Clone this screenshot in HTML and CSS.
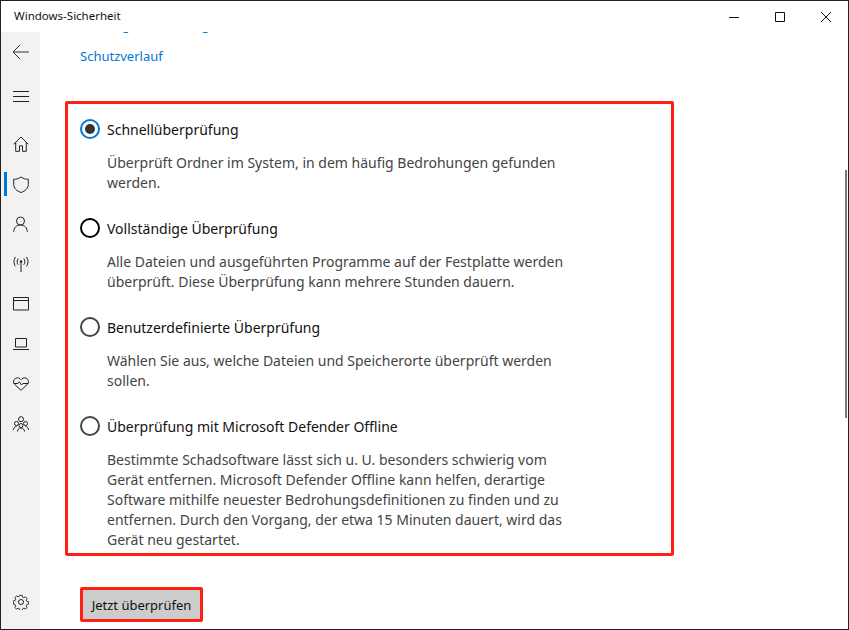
FILE: index.html
```html
<!DOCTYPE html>
<html lang="de">
<head>
<meta charset="utf-8">
<title>Windows-Sicherheit</title>
<link rel="stylesheet" href="styles.css">
</head>
<body>
<div class="window">
  <header class="titlebar">
    <span class="title">Windows-Sicherheit</span>
    <div class="controls">
      <span class="ctl"><svg width="10" height="10" viewBox="0 0 10 10"><path d="M0 5.500H10" stroke="#111" fill="none"/></svg></span>
      <span class="ctl"><svg width="10" height="10" viewBox="0 0 10 10"><path d="M.5.500h9v9h-9z" stroke="#111" fill="none"/></svg></span>
      <span class="ctl"><svg width="10" height="10" viewBox="0 0 10 10"><path d="M0 0L10 10M10 0L0 10" stroke="#111" fill="none"/></svg></span>
    </div>
  </header>
  <div class="body">
    <nav class="sidebar">
      <div class="navitem back"><svg width="18" height="16" viewBox="0 0 18 16"><path d="M1 8H17M8 1L1 8l7 7" stroke="#333" fill="none"/></svg></div>
      <div class="navitem burger"><svg width="16" height="12" viewBox="0 0 16 12"><path d="M0 1.500H16M0 6.500H16M0 11.500H16" stroke="#222" fill="none"/></svg></div>
      <div class="navlist">
        <div class="navitem"><svg width="16" height="16" viewBox="0 0 16 16"><path d="M.7 8.200L8 1l7.300 7.200M2.700 6.500v8.800h3.800V9.800h3v5.500h3.800V6.500" stroke="#222" fill="none"/></svg></div>
        <div class="navitem active"><svg width="16" height="17" viewBox="0 0 16 17"><path d="M8 1C6 2.500 3.500 3.300.7 3.300v5.200c0 3.700 3 6.500 7.300 8 4.300-1.500 7.300-4.300 7.300-8V3.300C12.500 3.300 10 2.500 8 1z" stroke="#222" fill="none"/></svg></div>
        <div class="navitem"><svg width="15" height="16" viewBox="0 0 15 16"><circle cx="7.500" cy="5" r="4" stroke="#222" fill="none"/><path d="M.7 15.800c0-4 2.800-6.800 6.800-6.800s6.800 2.800 6.800 6.800" stroke="#222" fill="none"/></svg></div>
        <div class="navitem"><svg width="16" height="16" viewBox="0 0 16 16"><circle cx="8" cy="5.500" r="1.200" fill="#222"/><path d="M8 6v10M5.200 2.500C3.800 4.300 3.800 7 5.200 8.800M10.800 2.500c1.400 1.800 1.400 4.500 0 6.300M2.500 1C.5 3.600.5 7.800 2.500 10.300M13.500 1c2 2.600 2 6.800 0 9.300" stroke="#222" fill="none"/></svg></div>
        <div class="navitem"><svg width="16" height="14" viewBox="0 0 16 14"><path d="M.5.500h15v12.500H.5zM.5 3.500h15" stroke="#222" fill="none"/></svg></div>
        <div class="navitem"><svg width="16" height="12" viewBox="0 0 16 12"><path d="M2.500.500h11v8.500h-11zM0 11.500h16" stroke="#222" fill="none"/></svg></div>
        <div class="navitem"><svg width="16" height="14" viewBox="0 0 16 14"><path d="M8 13.300L1.800 7.500C.2 6 .2 3.500 1.600 2 3 .5 5.500.4 7 1.800L8 2.800l1-1C10.500.4 13 .5 14.400 2c1.400 1.500 1.400 4-.2 5.500z" stroke="#222" fill="none"/><path d="M.8 6.500H5l1.300-1.800 2.200 3.300 1.300-1.500h5.400" stroke="#222" fill="none"/></svg></div>
        <div class="navitem"><svg width="16" height="16" viewBox="0 0 16 16"><circle cx="8" cy="3.200" r="2.500" stroke="#222" fill="none"/><circle cx="3.500" cy="7.500" r="2" stroke="#222" fill="none"/><circle cx="12.500" cy="7.500" r="2" stroke="#222" fill="none"/><circle cx="8" cy="9.500" r="2" stroke="#222" fill="none"/><path d="M.5 14c0-2 1.200-3.500 3-3.500M15.500 14c0-2-1.200-3.500-3-3.500M4.500 15.500c0-2 1.500-3.500 3.500-3.500s3.500 1.500 3.500 3.500" stroke="#222" fill="none"/></svg></div>
      </div>
      <div class="navitem settings"><svg width="16" height="16" viewBox="0 0 16 16"><circle cx="8" cy="8" r="2.500" stroke="#222" fill="none"/><path d="M6.700.600h2.600l.4 2 1.500.7 1.800-1 1.800 1.800-1 1.800.7 1.500 2 .4v2.600l-2 .4-.7 1.500 1 1.800-1.800 1.800-1.800-1-1.500.7-.4 2H6.700l-.4-2-1.500-.7-1.800 1-1.800-1.800 1-1.800-.7-1.500-2-.4V6.700l2-.4.7-1.500-1-1.800 1.800-1.800 1.800 1 1.500-.7z" transform="translate(.8 .8) scale(.9)" stroke="#222" fill="none"/></svg></div>
    </nav>
    <main class="main">
      <div class="scroller">
        <a class="link first">Zulässige Bedrohungen</a>
        <a class="link">Schutzverlauf</a>
        <section class="options">
          <div class="option">
            <div class="label"><span class="radio checked"></span>Schnellüberprüfung</div>
            <p class="desc">Überprüft Ordner im System, in dem häufig Bedrohungen gefunden werden.</p>
          </div>
          <div class="option">
            <div class="label"><span class="radio focus"></span>Vollständige Überprüfung</div>
            <p class="desc">Alle Dateien und ausgeführten Programme auf der Festplatte werden überprüft. Diese Überprüfung kann mehrere Stunden dauern.</p>
          </div>
          <div class="option">
            <div class="label"><span class="radio"></span>Benutzerdefinierte Überprüfung</div>
            <p class="desc">Wählen Sie aus, welche Dateien und Speicherorte überprüft werden sollen.</p>
          </div>
          <div class="option">
            <div class="label"><span class="radio"></span>Überprüfung mit Microsoft Defender Offline</div>
            <p class="desc">Bestimmte Schadsoftware lässt sich u. U. besonders schwierig vom Gerät entfernen. Microsoft Defender Offline kann helfen, derartige Software mithilfe neuester Bedrohungsdefinitionen zu finden und zu entfernen. Durch den Vorgang, der etwa 15 Minuten dauert, wird das Gerät neu gestartet.</p>
          </div>
        </section>
        <button class="scan">Jetzt überprüfen</button>
      </div>
      <div class="scrollthumb"></div>
    </main>
  </div>
</div>
</body>
</html>
```
FILE: styles.css
```css
* { box-sizing: border-box; }
html, body { margin: 0; height: 630px; overflow: hidden; background: #fff; }
body { font-family: "Noto Sans", "Open Sans", sans-serif; font-size: 14px; color: #000; }
.window { width: 849px; height: 630px; border: 1px solid #222; display: flex; flex-direction: column; background: #fff; }
.titlebar { height: 31px; flex: none; display: flex; justify-content: space-between; align-items: center; }
.title { font-size: 11.500px; padding-left: 13px; padding-bottom: 2px; color: #111; }
.controls { display: flex; margin-right: -1px; }
.ctl { width: 46px; height: 31px; display: flex; align-items: center; justify-content: center; }
.body { flex: 1; display: flex; min-height: 0; }
.sidebar { width: 39px; flex: none; background: #f2f2f2; display: flex; flex-direction: column; }
.navitem { height: 40px; display: flex; align-items: center; justify-content: center; position: relative; }
.burger { margin-top: 4px; }
.navlist { margin-top: 8px; display: flex; flex-direction: column; }
.active::before { content: ""; position: absolute; left: 3px; top: 8px; width: 3px; height: 24px; background: #0078d4; }
.settings { margin-top: auto; margin-bottom: 7px; }
.main { flex: 1; position: relative; overflow: hidden; min-width: 0; }
.scroller { margin-top: -17px; padding-left: 40px; display: flex; flex-direction: column; align-items: flex-start; }
.link { display: block; color: #0078d4; font-size: 13px; line-height: 21px; height: 29px; }
.link.first { height: 31px; }
.options { width: 609px; height: 455px; margin-left: -15px; margin-top: 26px; border: 3px solid #ff1f14; border-radius: 2px; padding: 14px 12px 0; overflow: hidden; }
.option { height: 99px; }
.label { display: flex; align-items: center; height: 22px; font-size: 14px; color: #111; gap: 7px; }
.radio { width: 20px; height: 20px; border-radius: 50%; border: 2px solid #444; flex: none; display: inline-block; position: relative; background: #fff; }
.radio.focus { border-color: #000; }
.radio.checked { border-color: #0078d4; }
.radio.checked::after { content: ""; position: absolute; left: 3px; top: 3px; width: 10px; height: 10px; background: #333; border-radius: 50%; }
.desc { margin: 13px 0 0 27px; width: 460px; font-size: 14px; line-height: 20px; color: #444; }
.scan { margin-top: 31px; width: 123px; height: 35px; border: 3px solid #ff1f14; border-radius: 2px; background: #ccc; font: inherit; font-size: 13px; color: #111; padding: 0; }
.scrollthumb { position: absolute; right: 1px; top: 138px; width: 2px; height: 248px; background: #777; }
```
